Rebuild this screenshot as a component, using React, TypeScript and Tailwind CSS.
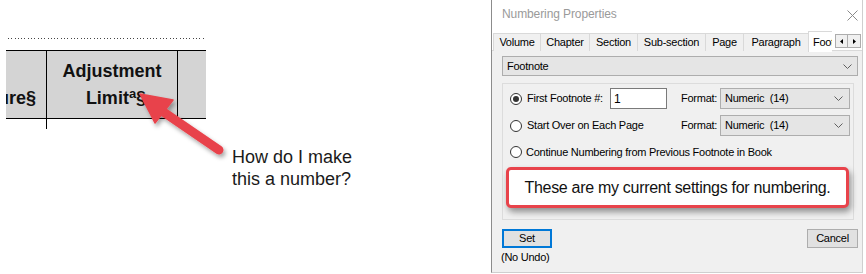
import React from "react";

const Chevron = () => (
  <svg width="9" height="5" viewBox="0 0 9 5" className="shrink-0">
    <path d="M0.5 0.5 L4.5 4.5 L8.5 0.5" fill="none" stroke="#606060" strokeWidth="1" />
  </svg>
);

const Radio = ({ checked }: { checked?: boolean }) => (
  <span className="w-[12px] h-[12px] rounded-full border border-[#333] bg-white flex items-center justify-center shrink-0">
    {checked && <span className="w-[6px] h-[6px] rounded-full bg-[#333]" />}
  </span>
);

const Select = ({ text }: { text: string }) => (
  <div className="w-[130px] h-[21px] bg-[#e5e5e5] border border-[#adadad] flex items-center justify-between pl-[4px] pr-[6px]">
    <span className="whitespace-pre">{text}</span>
    <Chevron />
  </div>
);

export default function App() {
  const tabs: [string, number][] = [
    ["Volume", 47],
    ["Chapter", 49],
    ["Section", 48],
    ["Sub-section", 68],
    ["Page", 38],
    ["Paragraph", 65],
  ];
  return (
    <div className="w-[866px] h-[274px] bg-white flex overflow-hidden font-['Liberation_Sans',Arial,sans-serif] text-black">
      {/* Left: document fragment */}
      <div className="w-[491px] shrink-0 relative flex flex-col">
        <div className="mt-[38px] ml-[8px] w-[197px] h-px bg-[repeating-linear-gradient(to_right,#444_0_1px,transparent_1px_3.3px)]" />
        <div className="mt-[11px] ml-[6px] w-[200px] h-[69px] flex border-y border-black bg-[#d4d4d4] font-bold text-[18px] leading-[27px] text-[#111]">
          <div className="w-[41px] border-r border-black pt-[34px] pr-[10px] flex justify-end overflow-hidden whitespace-nowrap">
            <span>ure§</span>
          </div>
          <div className="w-[131px] border-r border-black pt-[7px] flex flex-col items-center">
            <span>Adjustment</span>
            <span className="pl-[8px] whitespace-nowrap">
              Limit<span className="text-[13px] relative top-[-6px]">a</span>§
            </span>
          </div>
          <div className="flex-1" />
        </div>
        <div className="ml-[46px] w-px h-[10px] bg-black" />
        <div className="ml-[232px] mt-[17px] text-[18px] leading-[22px] text-[#1a1a1a]">
          <div>How do I make</div>
          <div>this a number?</div>
        </div>
        <svg className="absolute left-0 top-0 pointer-events-none" width="491" height="274" viewBox="0 0 491 274">
          <defs>
            <filter id="sh" x="-20%" y="-20%" width="140%" height="140%">
              <feDropShadow dx="2" dy="3" stdDeviation="2" floodColor="#000" floodOpacity="0.35" />
            </filter>
          </defs>
          <g filter="url(#sh)" fill="#e8434b" stroke="#e8434b">
            <line x1="219" y1="150" x2="162" y2="111" strokeWidth="9" strokeLinecap="round" />
            <polygon points="140,94 173,100 155,123" strokeWidth="1.5" strokeLinejoin="round" />
          </g>
        </svg>
      </div>

      {/* Dialog */}
      <div className="w-[372px] h-[273px] shrink-0 flex flex-col bg-[#f0f0f0] border-l border-r border-b border-l-[#8c8c8c] border-r-[#cfcfcf] border-b-[#cfcfcf] text-[11px] tracking-[-0.25px]">
        {/* Title bar */}
        <div className="h-[32px] bg-white flex justify-between shrink-0">
          <span className="pl-[10px] pt-[7px] text-[12px] leading-[14px] tracking-[-0.1px] text-[#9a9a9a]">Numbering Properties</span>
          <svg className="mt-[10px] mr-[4px]" width="11" height="11" viewBox="0 0 11 11">
            <path d="M0.5 0.5 L10.5 10.5 M10.5 0.5 L0.5 10.5" stroke="#8a8a8a" strokeWidth="1" />
          </svg>
        </div>
        {/* Tabs */}
        <div className="h-[19px] flex items-end pl-[1px] bg-white shrink-0 relative">
          <div className="absolute left-0 right-0 bottom-0 h-px bg-[#d9d9d9]" />
          {tabs.map(([t, w]) => (
            <div
              key={t}
              style={{ width: w }}
              className="h-[18px] border-l border-t border-[#d9d9d9] bg-[#f0f0f0] flex items-center justify-center leading-none relative"
            >
              {t}
            </div>
          ))}
          <div className="w-[24px] h-[21px] mb-[-1px] border-l border-t border-[#d9d9d9] bg-white overflow-hidden whitespace-nowrap pl-[4px] pt-[3px] leading-[14px] relative">
            Footnote
          </div>
          <div className="flex mb-[3px] ml-[3px] relative">
            <div className="w-[13px] h-[14px] border border-[#adadad] bg-[#f0f0f0] flex items-center justify-center">
              <svg width="3" height="5" viewBox="0 0 3 5"><path d="M3 0 L0 2.5 L3 5Z" fill="#000" /></svg>
            </div>
            <div className="w-[13px] h-[14px] border border-l-0 border-[#adadad] bg-[#f0f0f0] flex items-center justify-center">
              <svg width="3" height="5" viewBox="0 0 3 5"><path d="M0 0 L3 2.5 L0 5Z" fill="#000" /></svg>
            </div>
          </div>
        </div>
        {/* Panel */}
        <div className="flex flex-col pl-[10px] pr-[4px]">
          <div className="mt-[5px] h-[20px] bg-[#e5e5e5] border border-[#adadad] flex items-center justify-between pl-[4px] pr-[5px]">
            <span>Footnote</span>
            <Chevron />
          </div>
          <div className="mt-[7px] w-[352px] h-[137px] border border-[#dcdcdc] pt-[4px] pl-[7px] flex flex-col">
            <div className="h-[21px] flex items-center">
              <div className="w-[100px] flex items-center gap-[5px]">
                <Radio checked />
                <span>First Footnote #:</span>
              </div>
              <div className="w-[57px] h-[21px] bg-white border border-[#7a7a7a] pl-[3px] flex items-center text-[12px]">1</div>
              <span className="ml-[14px] w-[39px]">Format:</span>
              <Select text="Numeric  (14)" />
            </div>
            <div className="mt-[6px] h-[21px] flex items-center">
              <div className="w-[171px] flex items-center gap-[5px]">
                <Radio />
                <span>Start Over on Each Page</span>
              </div>
              <span className="w-[39px]">Format:</span>
              <Select text="Numeric  (14)" />
            </div>
            <div className="mt-[8px] h-[16px] flex items-center gap-[4px]">
              <Radio />
              <span>Continue Numbering from Previous Footnote in Book</span>
            </div>
            <div className="mt-[7px] ml-[-4px] w-[343px] h-[41px] bg-white border-[3px] border-[#e8434b] rounded-[5px] shadow-[2px_4px_6px_rgba(0,0,0,0.4)] flex items-center justify-center text-[16px] tracking-[-0.3px] text-[#111]">
              These are my current settings for numbering.
            </div>
          </div>
          <div className="mt-[9px] flex justify-between items-start">
            <div className="flex flex-col">
              <div className="w-[50px] h-[19px] bg-[#e1e1e1] border-2 border-[#0078d7] flex items-center justify-center">Set</div>
              <span className="mt-[2px] leading-[14px] ml-[-1px]">(No Undo)</span>
            </div>
            <div className="w-[51px] h-[19px] bg-[#e1e1e1] border border-[#adadad] flex items-center justify-center">Cancel</div>
          </div>
        </div>
      </div>
    </div>
  );
}
